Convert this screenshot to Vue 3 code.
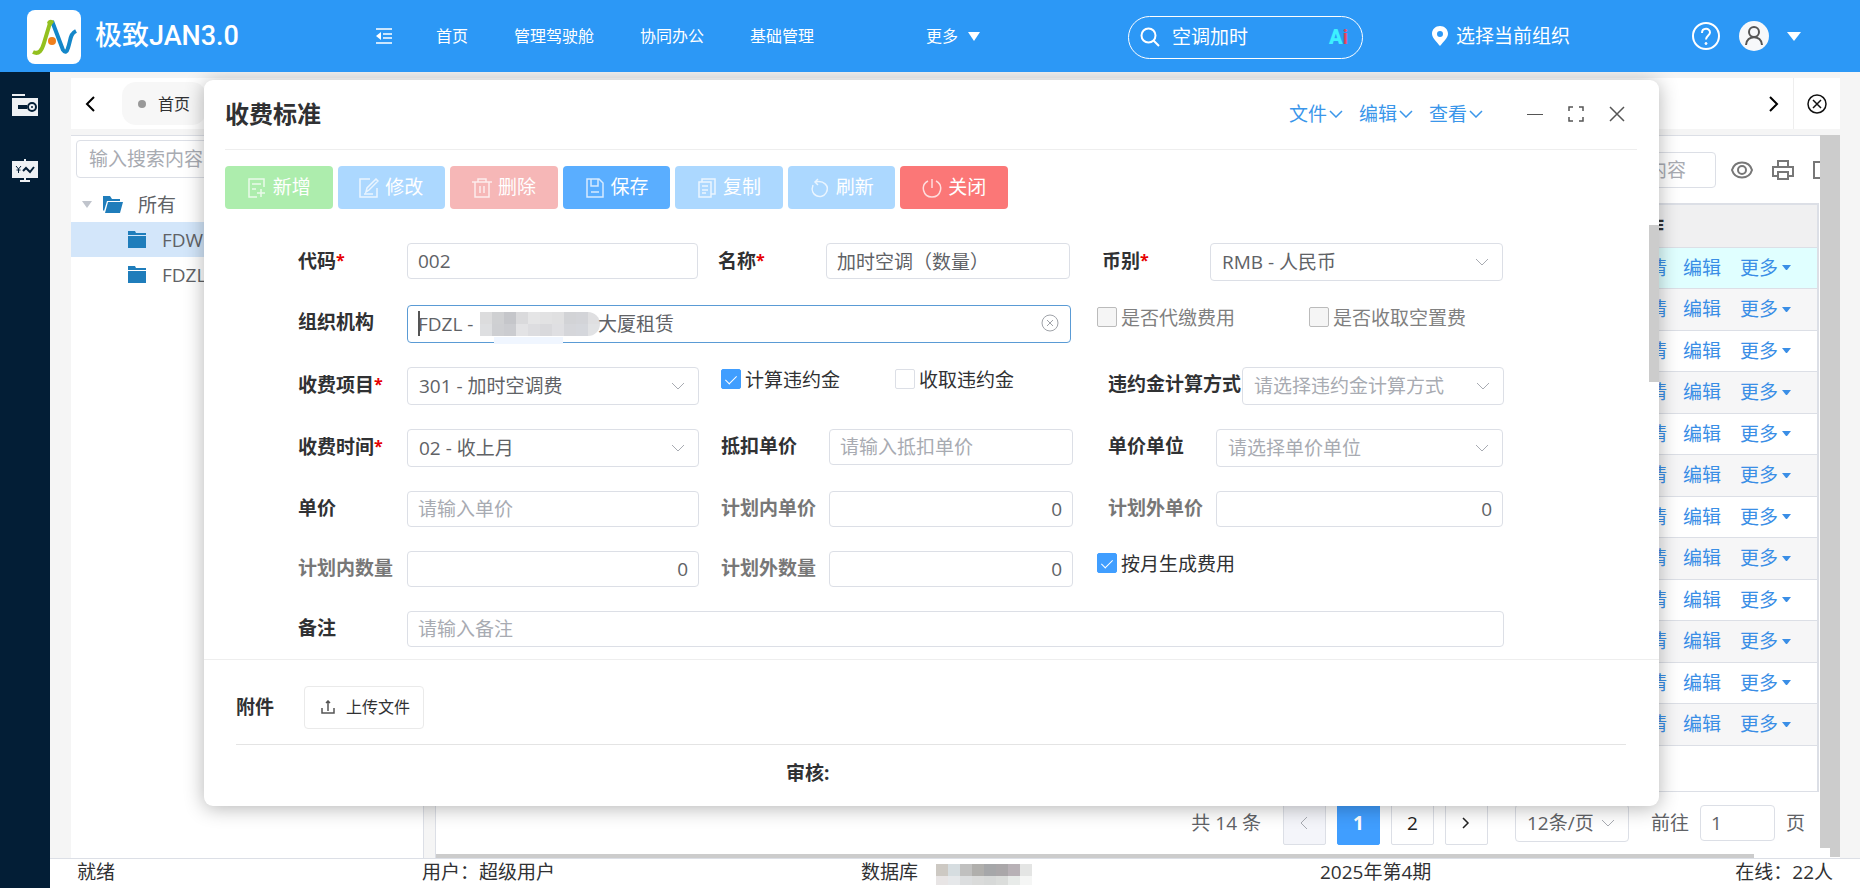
<script setup>
import { ref } from 'vue'

const navItems = ['首页', '管理驾驶舱', '协同办公', '基础管理']
const keyword = ref('空调加时')
const menus = ['文件', '编辑', '查看']
const rowCount = 12
const form = ref({
  code: '002',
  name: '加时空调（数量）',
  currency: 'RMB - 人民币',
  org: 'FDZL -',
  item: '301 - 加时空调费',
  time: '02 - 收上月',
  agent: false,
  vacant: false,
  calcPenalty: true,
  takePenalty: false,
  monthly: true,
})
const orgMosaic = [
  '#dcdcdd', '#cfd0d2', '#c5c6ca', '#dadadc', '#e5e5e6', '#e2e2e3', '#e0e0e1', '#d2d3d6', '#d3d4d8', '#dfdfe1',
  '#dedfe1', '#cecfd2', '#cbccd0', '#e3e3e5', '#dddde0', '#d9d9dc', '#dfdfe2', '#d5d6da', '#d5d7dc', '#e1e2e4',
]
const dbMosaic = [
  '#cdc9c3', '#d6dde0', '#c0c0bf', '#b0afac', '#a6a7a9', '#aaa7a9', '#b8b1b6', '#e4e5e4',
  '#e8e5e5', '#e6e8ea', '#dcdedf', '#dadbda', '#d7d9d8', '#dbdddb', '#e8ebe9', '#f5f6f5',
]
</script>

<template>
  <div class="page">
    <header class="topbar">
      <div class="logo">
        <svg viewBox="0 0 54 54" width="54" height="54" fill="none">
          <path d="M6 42C12 45 15 40 17 33L23 13" stroke="#93c01f" stroke-width="4" />
          <path d="M25 11L36 40C38 43 40 42 41 38C44 29 43 24 49 21" stroke="#1487c9" stroke-width="4" stroke-linejoin="round" />
          <path d="M20 13C21 9 26 9 27 12L24 16Z" fill="#93c01f" />
          <circle cx="25" cy="31" r="4" fill="#f07f1c" />
        </svg>
      </div>
      <h1>极致JAN3.0</h1>
      <button class="fold" aria-label="折叠菜单">
        <svg viewBox="0 0 18 18" width="18" height="18" fill="none" stroke="#fff" stroke-width="1.500">
          <path d="M1 2H17M8 7H17M8 11H17M1 16H17" /><path d="M6 5V13L1 9Z" fill="#fff" stroke="none" />
        </svg>
      </button>
      <nav>
        <a v-for="n in navItems" :key="n" href="#">{{ n }}</a>
      </nav>
      <button class="more">更多<svg viewBox="0 0 12 9" width="12" height="9" fill="#fff"><path d="M0 0H12L6 9Z" /></svg></button>
      <div class="right">
        <label class="search">
          <svg viewBox="0 0 20 20" width="20" height="20" fill="none" stroke="#fff" stroke-width="2"><circle cx="8.500" cy="8.500" r="7" /><path d="M13.500 13.500L19 19" /></svg>
          <input v-model="keyword" aria-label="搜索" />
          <span class="ai"><b>A</b><i>i</i></span>
        </label>
        <a class="place" href="#">
          <svg viewBox="0 0 16 20" width="16" height="20"><path fill="#fff" fill-rule="evenodd" d="M8 0C3.500 0 0 3.300 0 7.700C0 12 4.500 15.500 8 20C11.500 15.500 16 12 16 7.700C16 3.300 12.500 0 8 0ZM8 5A3 3 0 1 1 8 11A3 3 0 1 1 8 5Z" /></svg>
          选择当前组织
        </a>
        <button class="help" aria-label="帮助">
          <svg viewBox="0 0 28 28" width="28" height="28" fill="none" stroke="#fff" stroke-width="2"><circle cx="14" cy="14" r="13" /><path d="M10 11C10 5.500 18 5.500 18 10.500C18 13.500 14 13.500 14 17.500" /><circle cx="14" cy="21.500" r="1" fill="#fff" stroke-width="1" /></svg>
        </button>
        <button class="user" aria-label="用户">
          <svg viewBox="0 0 30 30" width="30" height="30" fill="none" stroke="#555" stroke-width="2"><circle cx="15" cy="15" r="15" fill="#f7f8fa" stroke="none" /><circle cx="15" cy="11" r="5" /><path d="M7 24C7.500 13.500 22.500 13.500 23 24" /></svg>
          <svg viewBox="0 0 14 9" width="14" height="9" fill="#fff"><path d="M0 0H14L7 9Z" /></svg>
        </button>
      </div>
    </header>

    <div class="body">
      <aside class="side">
        <svg viewBox="0 0 26 22" width="26" height="22"><path d="M0 0H13V2H0ZM0 4H26V22H0Z" fill="#eef1f4" /><path d="M6 11H15V15H6Z" fill="#031e36" /><circle cx="20" cy="13" r="4" fill="#eef1f4" stroke="#031e36" stroke-width="2" /><circle cx="20" cy="13" r="1" fill="#031e36" /></svg>
        <svg viewBox="0 0 26 24" width="26" height="24"><path d="M12 0H14V2H26V19H14V21H18V23H8V21H12V19H0V2H12Z" fill="#eef1f4" /><path d="M4 7L6.500 10L9 7M6.500 10V14M4.500 11H8.500" fill="none" stroke="#031e36" stroke-width="1" /><path d="M11 12L14 9L18 13L22 8" fill="none" stroke="#031e36" stroke-width="2" /></svg>
      </aside>

      <div class="workspace">
        <div class="content">
          <div class="tabs">
            <button class="prev" aria-label="上一个"><svg viewBox="0 0 10 16" width="10" height="16" fill="none" stroke="#000" stroke-width="2"><path d="M9 1L2 8L9 15" /></svg></button>
            <button class="tab"><span class="dot"></span>首页</button>
            <button class="next" aria-label="下一个"><svg viewBox="0 0 10 16" width="10" height="16" fill="none" stroke="#000" stroke-width="2"><path d="M1 1L8 8L1 15" /></svg></button>
            <button class="closeall" aria-label="全部关闭"><svg viewBox="0 0 20 20" width="20" height="20" fill="none" stroke="#111" stroke-width="1.500"><circle cx="10" cy="10" r="9" /><path d="M6 6L14 14M14 6L6 14" /></svg></button>
          </div>

          <div class="panels">
            <section class="tree">
              <input class="box" placeholder="输入搜索内容" aria-label="搜索" />
              <ul>
                <li>
                  <svg class="caret" viewBox="0 0 10 7" width="10" height="7" fill="#c0c4cc"><path d="M0 0H10L5 7Z" /></svg>
                  <svg viewBox="0 0 20 17" width="20" height="17" fill="#1f7dbb"><path d="M0 14V0H7L9 3H17V5H4L1 15ZM5 6H20L17 17H2Z" /></svg>所有
                </li>
                <li v-for="(t, i) in ['FDWL', 'FDZL']" :key="t" class="leaf" :class="{ on: i === 0 }">
                  <svg viewBox="0 0 18 17" width="18" height="17" fill="#1f7dbb"><path d="M0 0H7L8 2H18V4H0ZM0 5H18V17H0Z" /></svg>{{ t }}
                </li>
              </ul>
            </section>

            <section class="list">
              <div class="tools">
                <input class="box" aria-label="筛选" placeholder="输入搜索内容" />
                <div class="icons">
                  <svg viewBox="0 0 22 18" width="22" height="18" fill="none" stroke="#777" stroke-width="2"><path d="M1 9C4 -1 18 -1 21 9C18 19 4 19 1 9Z" /><circle cx="11" cy="9" r="4" /></svg>
                  <svg viewBox="0 0 22 20" width="22" height="20" fill="none" stroke="#777" stroke-width="2"><path d="M6 7V1H16V7M6 16H1V7H21V16H16M6 12H16V19H6Z" /></svg>
                  <svg viewBox="0 0 22 20" width="22" height="20" fill="none" stroke="#777" stroke-width="2"><path d="M1 2H20V18H1Z" /></svg>
                </div>
              </div>
              <div class="grid">
                <table>
                  <thead><tr><th>操作</th></tr></thead>
                  <tbody>
                    <tr v-for="r in rowCount" :key="r">
                      <td><div class="acts"><a href="#">详情</a><a href="#">编辑</a><a href="#">更多<svg viewBox="0 0 9 5" width="9" height="5" fill="#3a8ee6"><path d="M0 0H9L5 5H4Z" /></svg></a></div></td>
                    </tr>
                  </tbody>
                </table>
              </div>
              <div class="pager">
                <span class="total">共 14 条</span>
                <button class="pg off" aria-label="上一页"><svg viewBox="0 0 8 14" width="8" height="14" fill="none" stroke="#a8abb2" stroke-width="1"><path d="M7 1L1 7L7 13" /></svg></button>
                <button class="pg cur">1</button>
                <button class="pg">2</button>
                <button class="pg" aria-label="下一页"><svg viewBox="0 0 8 14" width="8" height="14" fill="none" stroke="#222" stroke-width="1.500"><path d="M1 2L6 7L1 12" /></svg></button>
                <div class="pick size">
                  <select aria-label="每页条数"><option>12条/页</option></select>
                  <svg viewBox="0 0 14 8" width="14" height="8" fill="none" stroke="#a8abb2"><path d="M1 1L7 7L13 1" /></svg>
                </div>
                <label class="goto">前往<input class="box" value="1" />页</label>
              </div>
              <div class="hbar"></div>
            </section>
            <div class="vbar"><i></i><i></i></div>
          </div>
        </div>

        <footer class="status">
          <span>就绪</span>
          <span>用户：超级用户</span>
          <span class="db">数据库<span class="mosaic"><i v-for="(c, i) in dbMosaic" :key="i" :style="{ background: c }"></i></span></span>
          <span>2025年第4期</span>
          <span class="end">在线：22人</span>
        </footer>
      </div>
    </div>

    <div class="dialog" role="dialog" aria-labelledby="dlg-title">
      <div class="dhead">
        <h2 id="dlg-title">收费标准</h2>
        <button v-for="m in menus" :key="m" class="menu">{{ m }}<svg viewBox="0 0 14 8" width="14" height="8" fill="none" stroke="#3a96ea" stroke-width="1.500"><path d="M1 1L7 7L13 1" /></svg></button>
        <div class="win">
          <button aria-label="最小化"><svg viewBox="0 0 16 16" width="16" height="16" fill="none" stroke="#555" stroke-width="1"><path d="M0 8.500H16" /></svg></button>
          <button aria-label="最大化"><svg viewBox="0 0 16 16" width="16" height="16" fill="none" stroke="#555" stroke-width="1.500"><path d="M1 5V1H5M11 1H15V5M15 11V15H11M5 15H1V11" /></svg></button>
          <button aria-label="关闭"><svg viewBox="0 0 16 16" width="16" height="16" fill="none" stroke="#555" stroke-width="1.500"><path d="M1 1L15 15M15 1L1 15" /></svg></button>
        </div>
      </div>

      <div class="toolbar">
        <button class="green"><svg viewBox="0 0 20 20"><path d="M17 9V1H2V19H10M5 6H14M5 11H9M14 11V19M10 15H18" /></svg>新增</button>
        <button class="pale"><svg viewBox="0 0 20 20"><path d="M11 1H1V19H18V10M7 14L8 10L17 1L19 3L10 12ZM5 16H14" /></svg>修改</button>
        <button class="rose"><svg viewBox="0 0 20 20"><path d="M0 4H20M6 4V1H14V4M3 4V19H17V4M8 8V15M12 8V15" /></svg>删除</button>
        <button class="blue"><svg viewBox="0 0 20 20"><path d="M2 1H14L18 5V19H2ZM6 1V8H13V1M6 14H14" /></svg>保存</button>
        <button class="pale"><svg viewBox="0 0 20 20"><path d="M2 4H14V19H2ZM5 4V1H18V16H14M5 8H11M5 12H11M5 15H9" /></svg>复制</button>
        <button class="pale"><svg viewBox="0 0 20 20"><path d="M3 7C-1 18 12 22 16 15C20 8 14 2 5 4M8 1L5 4L8 7" /></svg>刷新</button>
        <button class="red"><svg viewBox="0 0 20 20"><path d="M10 1V10M6 3C-2 7 1 19 10 19S22 7 14 3" /></svg>关闭</button>
      </div>

      <div class="thumb"></div>

      <form class="form" @submit.prevent>
        <div class="row first">
          <div class="cell"><label for="code">代码<em>*</em></label><input id="code" v-model="form.code" class="box" /></div>
          <div class="cell mid"><label for="name">名称<em>*</em></label><input id="name" v-model="form.name" class="box" /></div>
          <div class="cell last"><label for="cur">币别<em>*</em></label>
            <div class="pick"><select id="cur" v-model="form.currency"><option>RMB - 人民币</option></select><svg viewBox="0 0 14 8" width="14" height="8"><path d="M1 1L7 7L13 1" /></svg></div></div>
        </div>
        <div class="row wide">
          <div class="cell"><label for="org">组织机构</label>
            <div class="orgbox">
              <input id="org" v-model="form.org" class="box" />
              <span class="mosaic"><i v-for="(c, i) in orgMosaic" :key="i" :style="{ background: c }"></i></span>
              <span class="tail">大厦租赁</span>
              <svg viewBox="0 0 18 18" width="18" height="18" fill="none" stroke="#a0a3a9"><circle cx="9" cy="9" r="8" /><path d="M6 6L12 12M12 6L6 12" /></svg>
            </div></div>
          <div class="checks">
            <label class="muted"><input v-model="form.agent" type="checkbox" disabled />是否代缴费用</label>
            <label class="muted"><input v-model="form.vacant" type="checkbox" disabled />是否收取空置费</label>
          </div>
        </div>
        <div class="row">
          <div class="cell"><label for="item">收费项目<em>*</em></label>
            <div class="pick"><select id="item" v-model="form.item"><option>301 - 加时空调费</option></select><svg viewBox="0 0 14 8" width="14" height="8"><path d="M1 1L7 7L13 1" /></svg></div></div>
          <div class="checks narrow">
            <label><input v-model="form.calcPenalty" type="checkbox" />计算违约金</label>
            <label><input v-model="form.takePenalty" type="checkbox" />收取违约金</label>
          </div>
          <div class="cell long"><label for="method">违约金计算方式</label>
            <div class="pick empty"><select id="method"><option>请选择违约金计算方式</option></select><svg viewBox="0 0 14 8" width="14" height="8"><path d="M1 1L7 7L13 1" /></svg></div></div>
        </div>
        <div class="row">
          <div class="cell"><label for="time">收费时间<em>*</em></label>
            <div class="pick"><select id="time" v-model="form.time"><option>02 - 收上月</option></select><svg viewBox="0 0 14 8" width="14" height="8"><path d="M1 1L7 7L13 1" /></svg></div></div>
          <div class="cell mid"><label for="deduct">抵扣单价</label><input id="deduct" class="box" placeholder="请输入抵扣单价" /></div>
          <div class="cell last"><label for="unit">单价单位</label>
            <div class="pick empty"><select id="unit"><option>请选择单价单位</option></select><svg viewBox="0 0 14 8" width="14" height="8"><path d="M1 1L7 7L13 1" /></svg></div></div>
        </div>
        <div class="row">
          <div class="cell"><label for="price">单价</label><input id="price" class="box" placeholder="请输入单价" /></div>
          <div class="cell mid dim"><label for="inprice">计划内单价</label><input id="inprice" class="box num" value="0" readonly /></div>
          <div class="cell last dim"><label for="outprice">计划外单价</label><input id="outprice" class="box num" value="0" readonly /></div>
        </div>
        <div class="row six">
          <div class="cell dim"><label for="inqty">计划内数量</label><input id="inqty" class="box num" value="0" readonly /></div>
          <div class="cell mid dim"><label for="outqty">计划外数量</label><input id="outqty" class="box num" value="0" readonly /></div>
          <div class="checks"><label><input v-model="form.monthly" type="checkbox" />按月生成费用</label></div>
        </div>
        <div class="row full">
          <div class="cell"><label for="memo">备注</label><input id="memo" class="box" placeholder="请输入备注" /></div>
        </div>
      </form>

      <div class="attach">
        <div class="upload">
          <b>附件</b>
          <button><svg viewBox="0 0 14 14" width="14" height="14" fill="none" stroke="#555" stroke-width="1.500"><path d="M7 11V1M5 3L7 1L9 3M1 8V13H13V8" /></svg>上传文件</button>
        </div>
        <div class="audit">审核:</div>
      </div>
    </div>
  </div>
</template>

<style>
body {
  margin: 0;
}
</style>

<style scoped>
.page {
  position: relative;
  display: flex;
  flex-direction: column;
  min-height: 100vh;
  overflow: hidden;
  background: #f5f5f5;
  color: #303133;
  font: 19px/24px "Open Sans", "Noto Sans CJK SC", sans-serif;
}
.page * {
  box-sizing: border-box;
}
button,
input,
select {
  margin: 0;
  padding: 0;
  border: 0;
  background: none;
  color: inherit;
  font: inherit;
}
svg {
  display: block;
  flex: none;
}
a {
  color: inherit;
  text-decoration: none;
}

.topbar {
  position: relative;
  z-index: 3;
  display: flex;
  align-items: center;
  height: 72px;
  padding: 0 59px 0 27px;
  background: #2c98f6;
  color: #fff;
  font-size: 16px;
}
.logo {
  width: 54px;
  height: 54px;
  margin-top: 2px;
  border-radius: 8px;
  background: #fff;
}
h1 {
  width: 280px;
  margin: 0 0 0 14px;
  font: 500 27px/36px Roboto, "Noto Sans CJK SC", sans-serif;
}
nav {
  display: flex;
  gap: 46px;
  margin-left: 43px;
}
.more {
  display: flex;
  align-items: center;
  gap: 10px;
  margin-left: 112px;
}
.right {
  display: flex;
  align-items: center;
  margin-left: auto;
  font-size: 19px;
}
.search {
  display: flex;
  align-items: center;
  width: 235px;
  height: 43px;
  margin-top: 2px;
  padding: 0 14px 0 11px;
  border: 1px solid #fff;
  border-radius: 22px;
}
.search input {
  flex: 1;
  width: 0;
  margin-left: 12px;
}
.ai {
  font: 700 20px/24px Roboto, sans-serif;
  color: #3df0ff;
}
.ai i {
  color: #e5485d;
  font-style: normal;
}
.place {
  display: flex;
  align-items: center;
  gap: 8px;
  margin: 0 122px 0 69px;
}
.user {
  display: flex;
  align-items: center;
  gap: 18px;
  margin-left: 19px;
}

.body {
  display: flex;
  flex: 1;
}
.side {
  display: flex;
  flex: none;
  flex-direction: column;
  align-items: center;
  gap: 43px;
  width: 50px;
  padding-top: 22px;
  background: #031e36;
}
.workspace {
  display: flex;
  flex: 1;
  flex-direction: column;
  min-width: 0;
}
.content {
  display: flex;
  flex: 1;
  flex-direction: column;
  gap: 6px;
  padding: 6px 20px 0 21px;
}
.tabs {
  display: flex;
  align-items: center;
  height: 51px;
  padding-left: 14px;
  background: #fff;
  font-size: 16px;
}
.tab {
  display: flex;
  align-items: center;
  gap: 12px;
  height: 43px;
  margin-left: 27px;
  padding: 0 16px;
  border-radius: 14px;
  background: #f7f7f7;
}
.dot {
  width: 8px;
  height: 8px;
  border-radius: 50%;
  background: #999;
}
.next {
  margin-left: auto;
}
.closeall {
  height: 51px;
  margin-left: 14px;
  padding: 0 13px;
  border-left: 1px solid #eee;
}
.panels {
  display: flex;
  flex: 1;
}
.box {
  width: 100%;
  height: 36px;
  padding: 0 10px;
  border: 1px solid #dcdfe6;
  border-radius: 4px;
  background: #fff;
  color: #606266;
  outline: 0;
}
.box::placeholder {
  color: #a8abb2;
  opacity: 1;
}
.tree {
  width: 353px;
  margin-right: 11px;
  padding: 4px 0 0;
  border: 1px solid #dcdfe6;
  border-width: 1px 1px 0 0;
  background: #fff;
}
.tree .box {
  width: 340px;
  height: 38px;
  margin-left: 5px;
  padding-left: 12px;
}
ul {
  margin: 9px 0 0;
  padding: 0;
  list-style: none;
  color: #606266;
}
li {
  display: flex;
  align-items: center;
  height: 35px;
  padding-left: 11px;
  gap: 15px;
}
.caret {
  margin-right: -4px;
}
.leaf {
  gap: 16px;
  padding-left: 57px;
}
.on {
  background: #d3e6fa;
}
.list {
  display: flex;
  flex: 1;
  flex-direction: column;
  min-width: 0;
  overflow: hidden;
  border: 1px solid #dcdfe6;
  border-width: 1px 0 0 1px;
  background: #fff;
}
.tools {
  display: flex;
  align-items: center;
  justify-content: flex-end;
  height: 67px;
  margin-right: -15px;
}
.tools .box {
  width: 155px;
  margin-right: 15px;
}
.icons {
  display: flex;
  align-items: center;
  gap: 19px;
}
.grid {
  height: 589px;
  margin-right: 1px;
  border: solid #dcdfe6;
  border-width: 2px 2px 1px 0;
}
table {
  width: 100%;
  border-collapse: collapse;
}
th {
  height: 42px;
  padding: 0 153px 0 0;
  background: #f0f0f1;
  text-align: right;
  font-weight: 700;
}
td {
  height: 42px;
  padding: 0;
  border: solid #dcdfe6;
  border-width: 1px 0;
  background: #f6f6f7;
}
tr:nth-child(odd) td {
  height: 41px;
  background: #fff;
}
tbody tr:first-child td {
  background: #e0ffff;
}
.acts {
  display: flex;
  justify-content: flex-end;
  gap: 16px;
  padding-right: 26px;
  color: #3a8ee6;
}
.acts a {
  display: flex;
  align-items: center;
  gap: 4px;
}
.acts a:last-child {
  margin-left: 3px;
}
.pager {
  display: flex;
  align-items: center;
  justify-content: flex-end;
  margin-top: 8px;
  padding-right: 15px;
  color: #606266;
}
.total {
  margin-right: 22px;
}
.pg {
  display: flex;
  align-items: center;
  justify-content: center;
  width: 43px;
  height: 45px;
  margin-right: 11px;
  border: 1px solid #dcdfe6;
  border-radius: 2px;
  color: #222;
}
.off {
  background: #f4f5fa;
}
.cur {
  border-color: #409eff;
  background: #409eff;
  color: #fff;
  font-weight: 700;
}
.pick {
  position: relative;
  flex: 1;
  min-width: 0;
}
.pick select {
  width: 100%;
  height: 38px;
  padding: 0 11px;
  border: 1px solid #dcdfe6;
  border-radius: 4px;
  background: #fff;
  color: #606266;
  appearance: none;
}
.pick svg {
  position: absolute;
  right: 14px;
  top: 15px;
  fill: none;
  stroke: #a8abb2;
  pointer-events: none;
}
.empty select {
  color: #a8abb2;
}
.size {
  flex: none;
  width: 114px;
  margin: 0 22px 0 16px;
}
.goto {
  display: flex;
  align-items: center;
  gap: 11px;
}
.goto .box {
  width: 75px;
}
.hbar {
  width: 1318px;
  max-width: 96%;
  height: 4px;
  margin-top: auto;
  background: #ccc;
}
.vbar {
  display: flex;
  width: 20px;
  background: #fff;
}
.vbar i {
  width: 10px;
  margin-bottom: 10px;
  background: #ccc;
}
.vbar i:last-child {
  margin-bottom: 1px;
}
.status {
  display: grid;
  grid-template-columns: 345fr 439fr 459fr 410fr 103fr;
  height: 30px;
  padding: 1px 27px 0;
  border-top: 1px solid #dcdfe6;
  background: #fff;
}
.status .end {
  justify-self: end;
  white-space: nowrap;
}
.mosaic {
  display: grid;
}
.db {
  display: flex;
  gap: 18px;
}
.db .mosaic {
  grid-template: 12px 9px / repeat(8, 12px);
  align-content: center;
}

.dialog {
  position: absolute;
  z-index: 2;
  left: 204px;
  right: 201px;
  top: 80px;
  padding-bottom: 16px;
  border-radius: 9px;
  background: #fff;
  box-shadow: 0 2px 20px rgba(0, 0, 0, 0.3);
}
.dhead {
  display: flex;
  align-items: center;
  height: 70px;
  margin: 0 22px 0 21px;
  padding-bottom: 2px;
  border-bottom: 1px solid #eee;
}
h2 {
  margin: 0 auto 0 0;
  font: 700 24px/32px "Open Sans", "Noto Sans CJK SC", sans-serif;
}
.menu {
  display: flex;
  align-items: center;
  gap: 2px;
  margin-right: 16px;
  color: #3a96ea;
}
.win {
  display: flex;
  gap: 25px;
  margin: 0 12px 0 28px;
}
.toolbar {
  display: flex;
  gap: 5px;
  width: 783px;
  margin: 16px 0 0 21px;
}
.toolbar button {
  display: flex;
  flex: 1;
  align-items: center;
  justify-content: center;
  gap: 6px;
  height: 43px;
  padding-bottom: 2px;
  border-radius: 4px;
  color: #fff;
}
.toolbar svg {
  width: 20px;
  height: 20px;
  margin-top: 2px;
  fill: none;
  stroke: #fff;
  stroke-width: 1.5;
  opacity: 0.75;
}
.green {
  background: #adedad;
}
.pale {
  background: #acd8ff;
}
.rose {
  background: #f6b7b7;
}
.blue {
  background: #5aaeff;
}
.red {
  background: #fb7777;
}
.thumb {
  position: absolute;
  right: 0;
  top: 145px;
  width: 10px;
  height: 157px;
  background: #ccc;
}
.form {
  display: flex;
  flex-direction: column;
  gap: 24px;
  padding: 34px 155px 12px 94px;
}
.row {
  display: grid;
  grid-template-columns: 423fr 387fr 396fr;
  align-items: start;
}
.first {
  grid-template-columns: 420fr 384fr 402fr;
}
.wide {
  grid-template-columns: 799fr 407fr;
}
.six {
  grid-template-columns: 423fr 376fr 407fr;
}
.full {
  grid-template-columns: 1fr;
}
.cell {
  display: flex;
  min-width: 0;
}
.cell label {
  flex: none;
  width: 108px;
  line-height: 34px;
  font-weight: 700;
  white-space: nowrap;
}
.cell:first-child label {
  width: 109px;
}
.row > .cell:first-child {
  padding-right: 22px;
}
.first > .cell:first-child {
  padding-right: 20px;
}
.wide > .cell:first-child {
  padding-right: 26px;
}
.full > .cell:first-child {
  padding-right: 0;
}
.cell .box {
  flex: 1;
  width: 0;
}
.mid {
  padding-right: 35px;
}
.last {
  padding-right: 1px;
}
.first .mid {
  padding-right: 32px;
}
.six .mid {
  padding-right: 24px;
}
.long label {
  width: 134px;
}
.cell.dim label {
  color: #777;
}
em {
  color: #e60000;
  font-size: 16px;
  font-style: normal;
  vertical-align: 2px;
}
.num {
  text-align: right;
}
.orgbox {
  position: relative;
  display: flex;
  flex: 1;
}
.orgbox .box {
  height: 38px;
  border-color: #5a9bd5;
}
.orgbox::before {
  content: "";
  position: absolute;
  left: 11px;
  top: 6px;
  width: 2px;
  height: 25px;
  background: #555;
}
.orgbox::after {
  content: "";
  position: absolute;
  left: 87px;
  bottom: -1px;
  width: 69px;
  height: 7px;
  background: #f0f6ff;
}
.orgbox .mosaic {
  position: absolute;
  left: 73px;
  top: 7px;
  grid-template: 12px 12px / repeat(10, 12px);
  border-radius: 0 12px 12px 0;
  overflow: hidden;
}
.tail {
  position: absolute;
  left: 191px;
  top: 7px;
  color: #606266;
}
.orgbox svg {
  position: absolute;
  right: 12px;
  top: 9px;
}
.checks {
  display: grid;
  grid-template-columns: 212px auto;
}
.narrow {
  grid-template-columns: 174px auto;
}
.checks label {
  display: flex;
  align-items: center;
  gap: 4px;
  line-height: 26px;
}
.muted {
  color: #808080;
}
.checks input {
  position: relative;
  width: 20px;
  height: 20px;
  margin-bottom: 2px;
  border: 1px solid #dcdfe6;
  border-radius: 2px;
  appearance: none;
}
.checks input:disabled {
  border-color: #bbb;
  background: #f5f5f5;
}
.checks input:checked {
  border-color: #409eff;
  background: #409eff;
}
.checks input:checked::after {
  content: "";
  position: absolute;
  left: 6px;
  top: 3px;
  width: 5px;
  height: 10px;
  border: solid #fff;
  border-width: 0 1px 1px 0;
  rotate: 45deg;
}
.attach {
  border-top: 1px solid #eee;
}
.upload {
  display: flex;
  align-items: center;
  gap: 30px;
  height: 85px;
  margin: 0 33px 0 32px;
  padding-top: 10px;
  border-bottom: 1px solid #e4e4e4;
}
.upload button {
  display: flex;
  align-items: center;
  gap: 11px;
  height: 43px;
  padding: 0 13px 0 16px;
  border: 1px solid #eaeaea;
  border-radius: 4px;
  font-size: 16px;
}
.audit {
  padding: 16px 0 5px 40%;
  font-weight: 700;
}
</style>
